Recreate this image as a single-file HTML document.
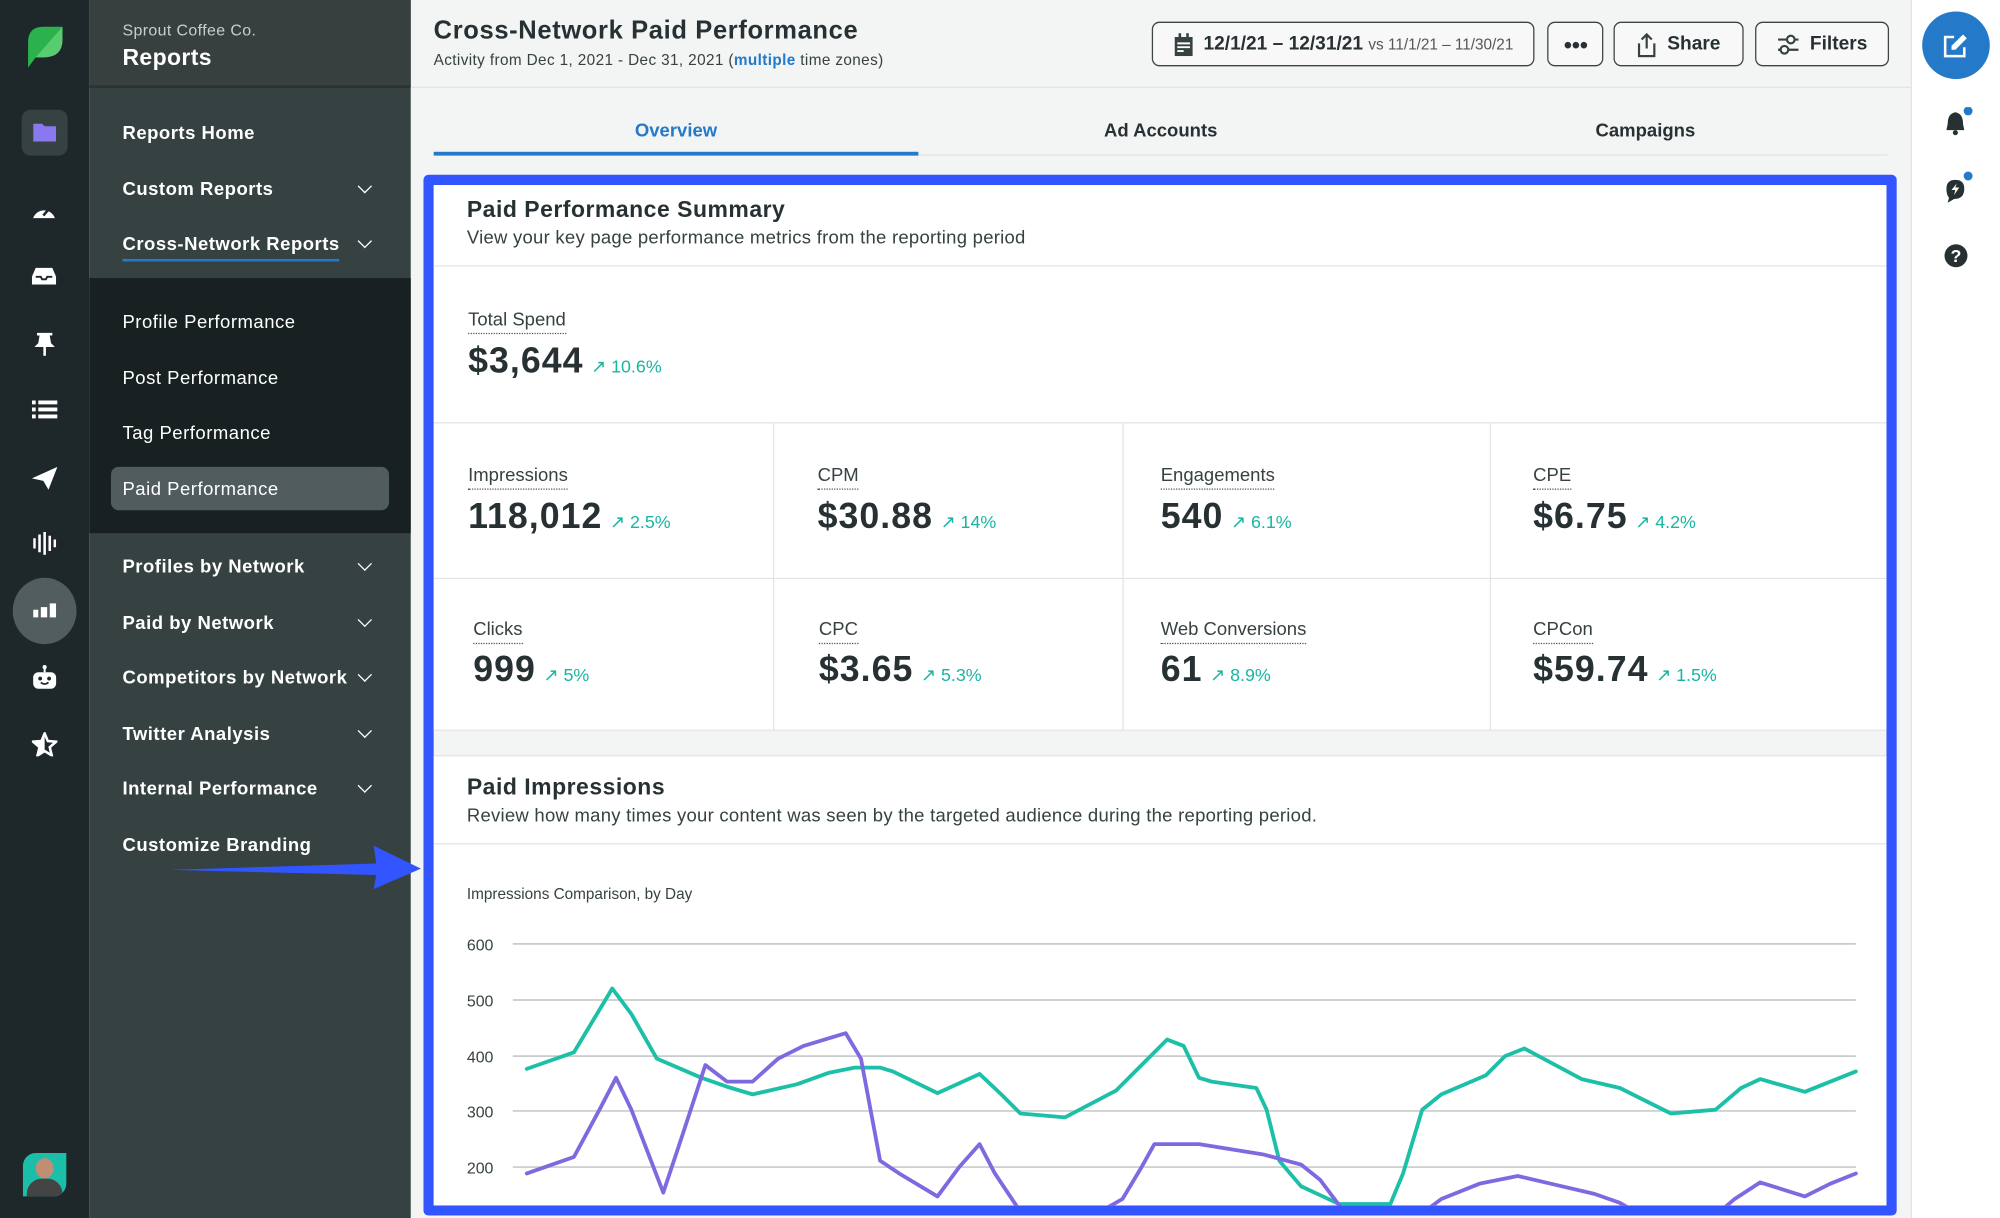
<!DOCTYPE html>
<html><head><meta charset="utf-8"><style>
*{box-sizing:border-box;margin:0;padding:0}
html,body{width:2000px;height:1218px;overflow:hidden;background:#f3f4f4}
#w{position:absolute;left:0;top:0;width:1568px;height:955px;transform:scale(1.27551);transform-origin:0 0;font-family:"Liberation Sans",sans-serif;color:#273133}
.a{position:absolute;white-space:nowrap}
.rail{left:0;top:0;width:70px;height:955px;background:#1e2729}
.side{left:70px;top:0;width:252px;height:955px;background:#364142}
.nav{position:absolute;white-space:nowrap;left:26px;font-size:14.5px;font-weight:bold;color:#fff;letter-spacing:.4px}
.sub{position:absolute;white-space:nowrap;left:26px;font-size:14.5px;color:#fff;letter-spacing:.4px}
.chev{position:absolute;left:212px;width:8px;height:8px;border-right:1.6px solid #fff;border-bottom:1.6px solid #fff;transform:rotate(45deg)}
.btn{position:absolute;top:17px;height:35px;border:1.5px solid #3d4547;border-radius:6px;background:#f8f8f8;font-size:15px;font-weight:bold;display:flex;align-items:center;justify-content:center;gap:8px;color:#273133;white-space:nowrap}
.lbl{position:absolute;white-space:nowrap;font-size:14.5px;color:#364142;border-bottom:1.5px dotted #555;padding-bottom:2px;line-height:16px}
.val{position:absolute;white-space:nowrap;font-size:28px;font-weight:bold;color:#273133;letter-spacing:.8px}
.pct{font-size:14px;font-weight:normal;color:#19b5a2;margin-left:6px;letter-spacing:0}
.vl{position:absolute;width:1px;background:#e3e5e5}
.hl{position:absolute;height:1px;background:#e3e5e5}
.tab{position:absolute;top:95px;font-size:14.5px;font-weight:bold;text-align:center;width:380px}
</style></head><body><div id="w">
<div class="a rail"></div>
<svg class="a" style="left:20px;top:19px" width="30" height="34" viewBox="0 0 30 34"><path d="M2 34 L2 14 Q2 2 14 2 L29 2 L29 12 Q29 26 14 26 L8 26 Z" fill="#2bb24c"/><path d="M8 26 L29 2 L29 12 Q29 26 14 26Z" fill="#59cc70"/></svg>
<div class="a" style="left:17px;top:86px;width:36px;height:36px;border-radius:7px;background:#364142"></div>
<svg class="a" style="left:26px;top:96px" width="18" height="15"><path d="M0 1h7l2 2h9v12H0z" fill="#8a78ee"/></svg>
<svg class="a" style="left:25px;top:156px" width="19" height="16"><path d="M1 15 A9 9 0 0 1 18 15 Z" fill="#fff"/><path d="M9 13 L14 7" stroke="#1e2729" stroke-width="2"/></svg>
<svg class="a" style="left:25px;top:209px" width="19" height="15"><path d="M3 1h13l3 7v6H0V8z" fill="#fff"/><path d="M3 8h4l1 2h3l1-2h4" stroke="#1e2729" stroke-width="1.5" fill="none"/></svg>
<svg class="a" style="left:27px;top:260px" width="16" height="19"><path d="M2 1h12v2h-2l1 6 3 3H0l3-3 1-6H2zM7 12h2v7H7z" fill="#fff"/></svg>
<svg class="a" style="left:25px;top:313px" width="20" height="16"><path d="M0 1h3v3H0zM5 1h15v3H5zM0 6.5h3v3H0zM5 6.5h15v3H5zM0 12h3v3H0zM5 12h15v3H5z" fill="#fff"/></svg>
<svg class="a" style="left:25px;top:366px" width="20" height="18"><path d="M0 9 L20 0 L13 18 L9 11Z" fill="#fff"/></svg>
<svg class="a" style="left:26px;top:417px" width="18" height="18"><path d="M0 5h2v8H0zM4 2h2v14H4zM8 0h2v18H8zM12 3h2v12h-2zM16 6h2v6h-2z" fill="#fff"/></svg>
<div class="a" style="left:10px;top:453px;width:50px;height:52px;border-radius:50%;background:#515d5e"></div>
<svg class="a" style="left:26px;top:472px" width="18" height="13"><path d="M0 6h4v6H0zM6 4h5v8H6zM13 1h5v11h-5z" fill="#fff"/></svg>
<svg class="a" style="left:25px;top:521px" width="20" height="20"><circle cx="10" cy="2" r="1.6" fill="#fff"/><rect x="9.2" y="3" width="1.6" height="3" fill="#fff"/><rect x="1" y="6" width="18" height="13" rx="4" fill="#fff"/><circle cx="6.5" cy="11" r="1.5" fill="#1e2729"/><circle cx="13.5" cy="11" r="1.5" fill="#1e2729"/><path d="M7 14 Q10 16.5 13 14" stroke="#1e2729" stroke-width="1.4" fill="none"/></svg>
<svg class="a" style="left:25px;top:574px" width="20" height="19"><path d="M10 1 L12.5 7 L19 7.5 L14 11.8 L15.6 18.3 L10 14.8 L4.4 18.3 L6 11.8 L1 7.5 L7.5 7Z" fill="none" stroke="#fff" stroke-width="2"/><path d="M10 1 L7.5 7 L1 7.5 L6 11.8 L4.4 18.3 L10 14.8Z" fill="#fff"/></svg>
<div class="a" style="left:18px;top:904px;width:34px;height:34px;border-radius:10px 0 10px 0;background:#1bbfa9;overflow:hidden"><div style="position:absolute;left:10px;top:4px;width:14px;height:16px;border-radius:50%;background:#c08e74"></div><div style="position:absolute;left:3px;top:20px;width:28px;height:20px;border-radius:12px 12px 0 0;background:#444"></div></div>

<div class="a side"></div>
<div class="a" style="left:70px;top:0;width:252px;height:69px;background:#37403f;border-bottom:2px solid #2a3233"></div>
<div class="a" style="left:96px;top:17px;font-size:12.5px;color:#c8cdcd;letter-spacing:.3px">Sprout Coffee Co.</div>
<div class="a" style="left:96px;top:35px;font-size:18px;font-weight:bold;color:#fff;letter-spacing:.3px">Reports</div>
<div class="a" style="left:70px;top:218px;width:252px;height:200px;background:#182022"></div>
<div class="a" style="left:70px;top:0;width:252px">
<div class="nav" style="top:97px">Reports Home</div>
<div class="nav" style="top:141px">Custom Reports</div><div class="chev" style="top:142px"></div>
<div class="nav" style="top:184px;border-bottom:2.5px solid #2479c9;padding-bottom:3px">Cross-Network Reports</div><div class="chev" style="top:185px"></div>
<div class="sub" style="top:245px">Profile Performance</div>
<div class="sub" style="top:289px">Post Performance</div>
<div class="sub" style="top:332px">Tag Performance</div>
<div style="position:absolute;left:17px;top:366px;width:218px;height:34px;border-radius:6px;background:#505c5d"></div>
<div class="sub" style="top:376px">Paid Performance</div>
<div class="nav" style="top:437px">Profiles by Network</div><div class="chev" style="top:438px"></div>
<div class="nav" style="top:481px">Paid by Network</div><div class="chev" style="top:482px"></div>
<div class="nav" style="top:524px">Competitors by Network</div><div class="chev" style="top:525px"></div>
<div class="nav" style="top:568px">Twitter Analysis</div><div class="chev" style="top:569px"></div>
<div class="nav" style="top:611px">Internal Performance</div><div class="chev" style="top:612px"></div>
<div class="nav" style="top:655px">Customize Branding</div>
</div>

<div class="a" style="left:322px;top:68px;width:1176px;height:1px;background:#e2e4e4"></div>
<div class="a" style="left:340px;top:13px;font-size:20px;font-weight:bold;color:#273133;letter-spacing:.5px">Cross-Network Paid Performance</div>
<div class="a" style="left:340px;top:40px;font-size:12px;color:#364142;letter-spacing:.3px">Activity from Dec 1, 2021 - Dec 31, 2021 (<b style="color:#2479c9">multiple</b> time zones)</div>
<div class="btn" style="left:903px;width:300px"><svg width="16" height="18"><path d="M1 3h14v15H1zM4 0h2v4H4zM10 0h2v4h-2z" fill="#364142"/><path d="M3 8h10M3 11h10M3 14h5" stroke="#fff" stroke-width="1.5"/></svg><span>12/1/21 – 12/31/21 <span style="font-size:12px;font-weight:normal;color:#555">vs 11/1/21 – 11/30/21</span></span></div>
<div class="btn" style="left:1213px;width:44px;font-size:12px;letter-spacing:-1px">●●●</div>
<div class="btn" style="left:1265px;width:102px"><svg width="16" height="20"><path d="M8 13V2M4 6l4-4 4 4M2 9v10h12V9" stroke="#364142" stroke-width="1.7" fill="none"/></svg>Share</div>
<div class="btn" style="left:1376px;width:105px"><svg width="18" height="18"><path d="M1 5h16M1 13h16" stroke="#364142" stroke-width="1.7"/><circle cx="11" cy="5" r="3" fill="#f8f8f8" stroke="#364142" stroke-width="1.7"/><circle cx="6" cy="13" r="3" fill="#f8f8f8" stroke="#364142" stroke-width="1.7"/></svg>Filters</div>

<div class="a" style="left:1498px;top:0;width:70px;height:955px;background:#fff;border-left:1px solid #e2e4e4"></div>
<div class="a" style="left:1507px;top:9px;width:53px;height:53px;border-radius:50%;background:#2479c9"></div>
<svg class="a" style="left:1523px;top:26px" width="20" height="20"><path d="M9 3H2v15h15v-7" stroke="#fff" stroke-width="2" fill="none"/><path d="M16 1l3 3-9 9H7v-3z" fill="#fff"/></svg>
<svg class="a" style="left:1524px;top:84px" width="24" height="24"><path d="M9 4 Q3 5 3 13 L2 18 H16 L15 13 Q15 5 9 4Z" fill="#273133"/><circle cx="9" cy="20" r="2" fill="#273133"/><circle cx="19" cy="3" r="3.5" fill="#2479c9"/></svg>
<svg class="a" style="left:1524px;top:134px" width="24" height="26"><path d="M9 7 Q2 7 2 14 Q2 19 4 21 L3 25 L8 22 Q16 22 16 14 Q16 7 9 7Z" fill="#273133"/><path d="M10 10 L6 15 H9 L8 19 L12 13 H9Z" fill="#fff"/><circle cx="19" cy="4" r="3.5" fill="#2479c9"/></svg>
<svg class="a" style="left:1524px;top:191px" width="19" height="19"><circle cx="9.5" cy="9.5" r="9" fill="#273133"/><text x="9.5" y="14.5" text-anchor="middle" font-size="14" font-weight="bold" fill="#fff" font-family="Liberation Sans">?</text></svg>

<div class="tab" style="left:340px;color:#2479c9">Overview</div>
<div class="tab" style="left:720px">Ad Accounts</div>
<div class="tab" style="left:1100px">Campaigns</div>
<div class="a" style="left:340px;top:121px;width:1140px;height:1px;background:#e2e4e4"></div>
<div class="a" style="left:340px;top:119px;width:380px;height:3px;background:#2479c9"></div>

<div class="a" style="left:332px;top:137px;width:1155px;height:816px;border:8px solid #3355ff;border-radius:4px;background:#f3f4f4;overflow:hidden">
 <div class="a" style="left:0;top:0;width:1139px;height:428px;background:#fff;border-bottom:1px solid #e3e5e5"></div>
 <div class="a" style="left:26px;top:9px;font-size:18px;font-weight:bold;letter-spacing:.4px">Paid Performance Summary</div>
 <div class="a" style="left:26px;top:34px;font-size:14.5px;color:#364142;letter-spacing:.2px">View your key page performance metrics from the reporting period</div>
 <div class="hl" style="left:0;top:63px;width:1139px"></div>
 <div class="lbl" style="left:27px;top:98px">Total Spend</div>
 <div class="val" style="left:27px;top:122px">$3,644<span class="pct">↗ 10.6%</span></div>
 <div class="hl" style="left:0;top:186px;width:1139px"></div>
 <div class="hl" style="left:0;top:308px;width:1139px"></div>
 <div class="vl" style="left:266px;top:186px;height:242px"></div>
 <div class="vl" style="left:540px;top:186px;height:242px"></div>
 <div class="vl" style="left:828px;top:186px;height:242px"></div>
 <div class="lbl" style="left:27px;top:220px">Impressions</div><div class="val" style="left:27px;top:244px">118,012<span class="pct">↗ 2.5%</span></div>
 <div class="lbl" style="left:301px;top:220px">CPM</div><div class="val" style="left:301px;top:244px">$30.88<span class="pct">↗ 14%</span></div>
 <div class="lbl" style="left:570px;top:220px">Engagements</div><div class="val" style="left:570px;top:244px">540<span class="pct">↗ 6.1%</span></div>
 <div class="lbl" style="left:862px;top:220px">CPE</div><div class="val" style="left:862px;top:244px">$6.75<span class="pct">↗ 4.2%</span></div>
 <div class="lbl" style="left:31px;top:341px">Clicks</div><div class="val" style="left:31px;top:364px">999<span class="pct">↗ 5%</span></div>
 <div class="lbl" style="left:302px;top:341px">CPC</div><div class="val" style="left:302px;top:364px">$3.65<span class="pct">↗ 5.3%</span></div>
 <div class="lbl" style="left:570px;top:341px">Web Conversions</div><div class="val" style="left:570px;top:364px">61<span class="pct">↗ 8.9%</span></div>
 <div class="lbl" style="left:862px;top:341px">CPCon</div><div class="val" style="left:862px;top:364px">$59.74<span class="pct">↗ 1.5%</span></div>

 <div class="a" style="left:0;top:447px;width:1139px;height:400px;background:#fff;border-top:1px solid #e3e5e5"></div>
 <div class="a" style="left:26px;top:462px;font-size:18px;font-weight:bold;letter-spacing:.4px">Paid Impressions</div>
 <div class="a" style="left:26px;top:487px;font-size:14.5px;color:#364142;letter-spacing:.2px">Review how many times your content was seen by the targeted audience during the reporting period.</div>
 <div class="hl" style="left:0;top:516px;width:1139px"></div>
 <div class="a" style="left:26px;top:549px;font-size:12px;color:#364142">Impressions Comparison, by Day</div>
 <svg class="a" style="left:-340px;top:-145px" width="1568" height="955">
  <g font-family="Liberation Sans" font-size="12.5" fill="#364142">
   <text x="366" y="745">600</text><text x="366" y="789">500</text><text x="366" y="833">400</text><text x="366" y="876">300</text><text x="366" y="920">200</text>
  </g>
  <g stroke="#c9cccc" stroke-width="1.3"><path d="M402 740H1455M402 784H1455M402 828H1455M402 871H1455M402 915H1455"/></g>
  <polyline fill="none" stroke="#1cbfa7" stroke-width="3" stroke-linejoin="round" stroke-linecap="round" points="413,838 450,825 465,800 480,775 495,795 515,830 550,845 570,852 590,858 625,850 650,841 670,837 690,837 700,840 735,857 768,842 785,858 800,873 835,876 875,855 900,830 915,815 928,820 940,845 950,848 985,853 993,870 1003,910 1020,930 1050,944 1090,944 1100,920 1115,870 1130,858 1165,843 1180,828 1195,822 1240,846 1270,853 1310,873 1345,870 1365,853 1380,846 1415,856 1455,840"/>
  <polyline fill="none" stroke="#8069e0" stroke-width="3" stroke-linejoin="round" stroke-linecap="round" points="413,920 450,907 470,870 483,845 495,870 520,935 535,890 553,835 570,848 590,848 610,830 630,820 663,810 675,830 690,910 705,920 735,938 752,915 768,897 780,920 800,950 845,960 880,940 895,915 905,897 940,897 990,905 1020,913 1035,925 1050,945 1065,960 1110,955 1130,940 1160,928 1190,922 1220,929 1250,936 1270,943 1290,955 1340,957 1360,940 1380,927 1415,938 1435,928 1455,920"/>
 </svg>
</div>

<svg class="a" style="left:125px;top:655px" width="210" height="45"><path d="M8 27 L170 22 L168 8 L205 26 L168 42 L170 31 Z" fill="#3355ff"/></svg>
</div></body></html>
